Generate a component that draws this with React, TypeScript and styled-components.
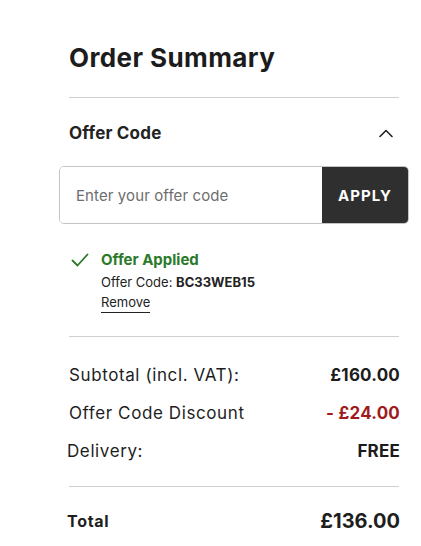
import * as React from 'react';
import styled, { createGlobalStyle } from 'styled-components';

const Global = createGlobalStyle`
  body {
    margin: 0;
    background: #ffffff;
    font-family: "Inter", "DejaVu Sans", sans-serif;
    color: #1e1e1e;
  }
`;

const Panel = styled.div`
  width: 330px;
  padding: 40px 0 0 69px;
  display: flex;
  flex-direction: column;
`;

const Title = styled.h1`
  margin: 0;
  font-size: 26px;
  font-weight: 700;
  line-height: 36px;
  letter-spacing: 0.4px;
  color: #1c1c1c;
`;

const Divider = styled.hr<{ $top: number; $bottom: number }>`
  border: 0;
  border-top: 1px solid #cfcfcf;
  margin: ${(p) => p.$top}px 0 ${(p) => p.$bottom}px;
`;

const SectionHead = styled.div`
  display: flex;
  align-items: center;
  justify-content: space-between;
  height: 24px;
  padding-right: 5px;
`;

const SectionTitle = styled.span`
  font-size: 17px;
  font-weight: 700;
  letter-spacing: 0.2px;
  color: #222;
`;

const CodeForm = styled.form`
  display: flex;
  margin: 21px -10px 0 -10px;
  height: 56px;
  border: 1px solid #c4c4c4;
  border-radius: 5px;
  overflow: hidden;
`;

const CodeInput = styled.input`
  flex: 1;
  min-width: 0;
  border: 0;
  outline: none;
  padding: 0 16px;
  font-family: inherit;
  font-size: 15px;
  letter-spacing: 0.1px;
  color: #222;
  &::placeholder {
    color: #6e6e6e;
  }
`;

const ApplyButton = styled.button`
  flex: 0 0 86px;
  border: 0;
  background: #2f2f2f;
  color: #ffffff;
  font-family: inherit;
  font-size: 15px;
  font-weight: 700;
  letter-spacing: 1px;
  cursor: pointer;
`;

const Applied = styled.div`
  display: flex;
  gap: 12px;
  margin-top: 25px;
  padding-left: 2px;
`;

const AppliedText = styled.div`
  display: flex;
  flex-direction: column;
`;

const AppliedTitle = styled.span`
  font-size: 15px;
  font-weight: 700;
  color: #2b7a2b;
  line-height: 22px;
`;

const AppliedCode = styled.span`
  font-size: 13px;
  line-height: 22px;
  color: #222;
  b {
    font-weight: 700;
  }
`;

const RemoveLink = styled.a`
  align-self: flex-start;
  font-size: 13px;
  line-height: 19px;
  color: #222;
  text-decoration: none;
  border-bottom: 1.5px solid #222;
  cursor: pointer;
`;

const Lines = styled.div`
  display: flex;
  flex-direction: column;
  gap: 16px;
  margin-right: -1px;
`;

const Line = styled.div<{ $shift?: number }>`
  display: flex;
  justify-content: space-between;
  align-items: center;
  height: 22px;
  font-size: 17px;
  letter-spacing: 0.6px;
  margin-left: ${(p) => p.$shift ?? 0}px;
`;

const Amount = styled.span<{ $tone?: string }>`
  font-weight: 700;
  letter-spacing: 0.2px;
  color: ${(p) => p.$tone ?? '#1c1c1c'};
`;

const TotalLine = styled(Line)`
  height: 28px;
  margin-left: -2px;
  margin-right: -1px;
  font-size: 16px;
  font-weight: 700;
  letter-spacing: 0.7px;
`;

const TotalAmount = styled.span`
  font-size: 20px;
  font-weight: 700;
  letter-spacing: 0;
`;

const Chevron = () => (
  <svg width="16" height="10" viewBox="0 0 16 10" fill="none">
    <path d="M2 8.5L8 2.5l6 6" stroke="#222" strokeWidth="1.6" strokeLinecap="round" strokeLinejoin="round" />
  </svg>
);

const Check = () => (
  <svg width="18" height="14" viewBox="0 0 18 14" fill="none" style={{ marginTop: 4 }}>
    <path d="M1.5 7.5l5 5L16.5 1.5" stroke="#2b7a2b" strokeWidth="1.8" strokeLinecap="round" strokeLinejoin="round" />
  </svg>
);

export default function App() {
  return (
    <>
      <Global />
      <Panel>
        <Title>Order Summary</Title>
        <Divider $top={21} $bottom={23} />
        <SectionHead>
          <SectionTitle>Offer Code</SectionTitle>
          <Chevron />
        </SectionHead>
        <CodeForm onSubmit={(e) => e.preventDefault()}>
          <CodeInput placeholder="Enter your offer code" />
          <ApplyButton type="submit">APPLY</ApplyButton>
        </CodeForm>
        <Applied>
          <Check />
          <AppliedText>
            <AppliedTitle>Offer Applied</AppliedTitle>
            <AppliedCode>
              Offer Code: <b>BC33WEB15</b>
            </AppliedCode>
            <RemoveLink>Remove</RemoveLink>
          </AppliedText>
        </Applied>
        <Divider $top={23} $bottom={27} />
        <Lines>
          <Line>
            <span>Subtotal (incl. VAT):</span>
            <Amount>£160.00</Amount>
          </Line>
          <Line>
            <span>Offer Code Discount</span>
            <Amount $tone="#a01c1c">- £24.00</Amount>
          </Line>
          <Line $shift={-2}>
            <span>Delivery:</span>
            <Amount>FREE</Amount>
          </Line>
        </Lines>
        <Divider $top={24} $bottom={20} />
        <TotalLine>
          <span>Total</span>
          <TotalAmount>£136.00</TotalAmount>
        </TotalLine>
      </Panel>
    </>
  );
}
